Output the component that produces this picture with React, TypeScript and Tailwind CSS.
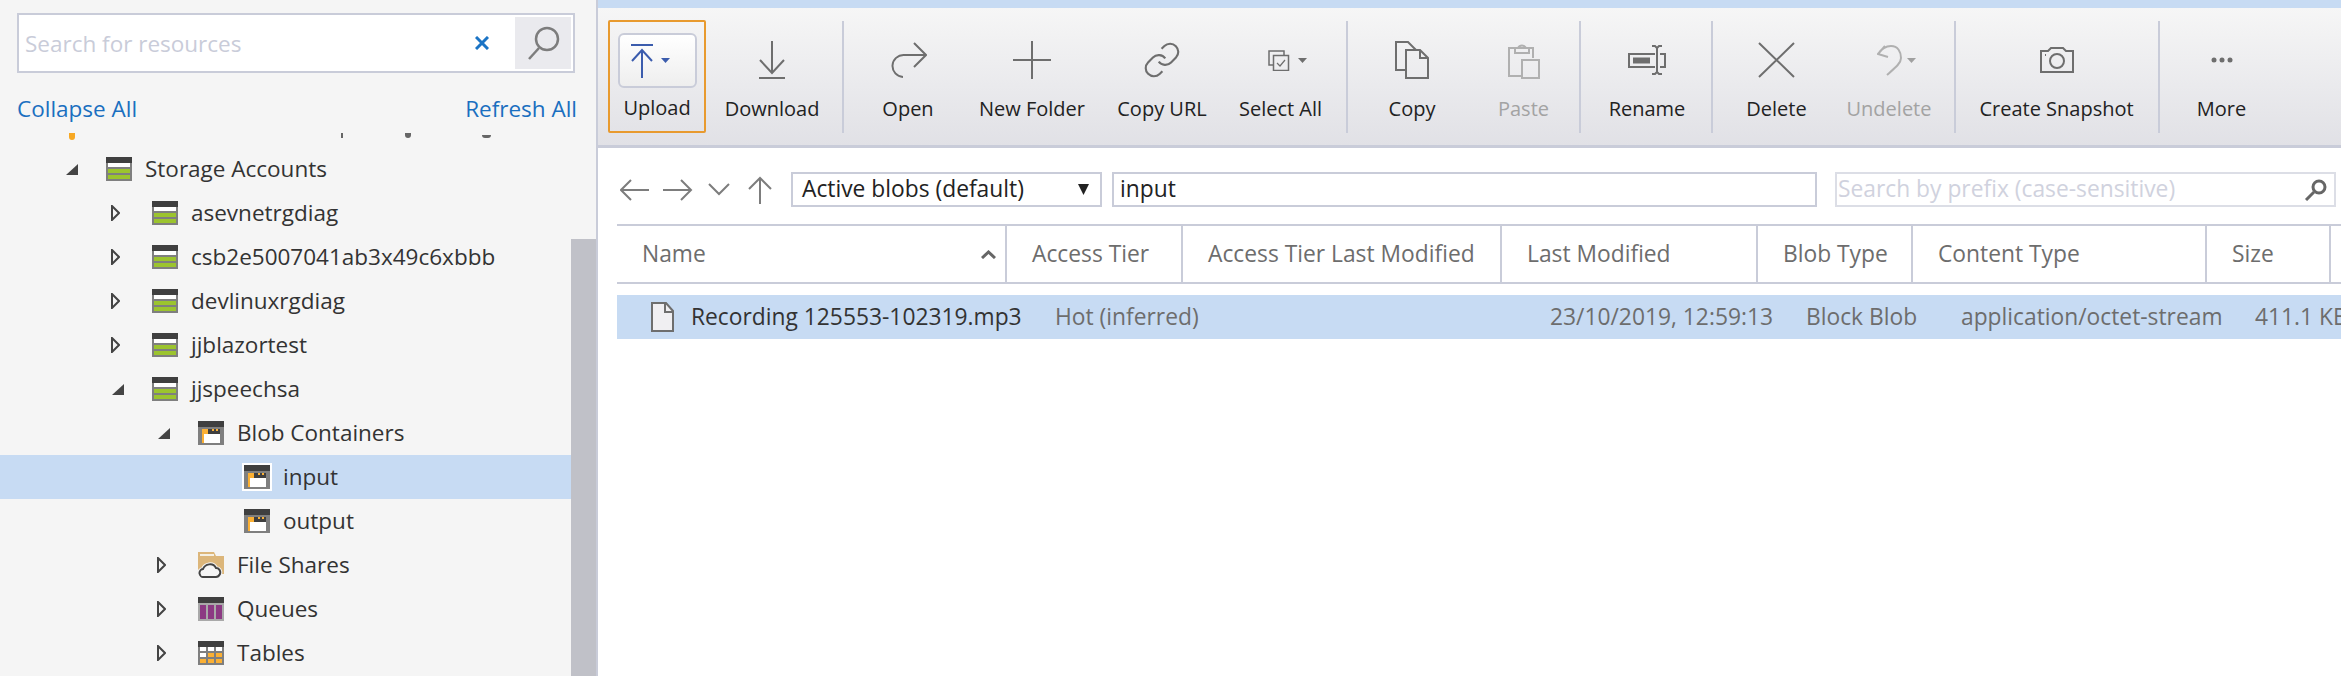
import type { ReactNode } from "react";

function Caret({ color = "#3b5cad" }: { color?: string }) {
  return (
    <svg width="9" height="5" viewBox="0 0 9 5" className="shrink-0">
      <path d="M0 0h9L4.500 5z" fill={color} />
    </svg>
  );
}

const stroke = "#6e6e6e";
const muted = "#b0b0b0";

const UploadIcon = (
  <div className="flex items-center gap-[7px] pl-[10px]">
    <svg width="24" height="34" viewBox="0 0 24 34" fill="none" stroke="#3b5cad" strokeWidth="2">
      <path d="M1 1h22M12 6v31M2 17L12 6l10 11" />
    </svg>
    <Caret />
  </div>
);

const toolbar: { label: string; width: string; icon: ReactNode; disabled?: boolean; sep?: string }[] = [
  {
    label: "Download",
    width: "w-[132px]",
    icon: (
      <svg width="26" height="38" viewBox="0 0 26 38" fill="none" stroke={stroke} strokeWidth="2">
        <path d="M13 0v32M1 19l12 13 12-13M0 37h26" />
      </svg>
    ),
    sep: "ml-[4px]",
  },
  {
    label: "Open",
    width: "w-[120px]",
    icon: (
      <svg width="37" height="36" viewBox="0 0 37 36" fill="none" stroke={stroke} strokeWidth="2">
        <path d="M24 1l12 12-12 12M36 13H14A11 11 0 0 0 13 35" />
      </svg>
    ),
  },
  {
    label: "New Folder",
    width: "w-[128px]",
    icon: (
      <svg width="38" height="38" viewBox="0 0 38 38" fill="none" stroke={stroke} strokeWidth="2">
        <path d="M19 0v38M0 19h38" />
      </svg>
    ),
  },
  {
    label: "Copy URL",
    width: "w-[132px]",
    icon: (
      <svg width="36" height="36" viewBox="1 1 22 22" fill="none" stroke={stroke} strokeWidth="1.300">
        <path d="M10 13a5 5 0 0 0 7.540.540l3-3a5 5 0 0 0-7.070-7.070l-1.720 1.710" />
        <path d="M14 11a5 5 0 0 0-7.540-.540l-3 3a5 5 0 0 0 7.070 7.070l1.710-1.710" />
      </svg>
    ),
  },
  {
    label: "Select All",
    width: "w-[105px]",
    icon: (
      <div className="flex items-center gap-[8px] pl-[14px]">
        <svg width="22" height="21" viewBox="0 0 22 21" fill="none" stroke={stroke} strokeWidth="1.500">
          <path d="M5 15H1V1h15v4" />
          <path d="M5.500 5.500h15v15h-15z" />
          <path d="M9 13l3 3 5-6" strokeWidth="1.200" />
        </svg>
        <Caret color="#6e6e6e" />
      </div>
    ),
    sep: "ml-[13px]",
  },
  {
    label: "Copy",
    width: "w-[120px]",
    icon: (
      <svg width="34" height="38" viewBox="0 0 34 38" fill="none" stroke={stroke} strokeWidth="2">
        <path d="M10 29H1V1h12l8 8" />
        <path d="M11 9h14l8 8v20H11z" />
        <path d="M25 9v8h8" />
      </svg>
    ),
  },
  {
    label: "Paste",
    width: "w-[103px]",
    disabled: true,
    icon: (
      <svg width="32" height="38" viewBox="0 0 32 38" fill="none" stroke={muted} strokeWidth="2">
        <path d="M14 35H1V7h24v10" />
        <path d="M7 7v5h14V7h-3a4.500 4.500 0 0 0-8 0z" />
        <path d="M14 19h17v18H14z" />
      </svg>
    ),
    sep: "ml-[4px]",
  },
  {
    label: "Rename",
    width: "w-[124px]",
    icon: (
      <svg width="38" height="30" viewBox="0 0 38 30" fill="none" stroke={stroke} strokeWidth="2">
        <path d="M27 9H1v13h26" />
        <path d="M5 12.500h17v6H5z" fill={stroke} stroke="none" />
        <path d="M24 1h3l2 2 2-2h3M24 29h3l2-2 2 2h3M29 3v24M32 9h5v13h-5" />
      </svg>
    ),
    sep: "ml-[2px]",
  },
  {
    label: "Delete",
    width: "w-[119px]",
    icon: (
      <svg width="37" height="36" viewBox="0 0 37 36" fill="none" stroke={stroke} strokeWidth="2">
        <path d="M1 1l35 34M36 1L1 35" />
      </svg>
    ),
  },
  {
    label: "Undelete",
    width: "w-[106px]",
    disabled: true,
    icon: (
      <div className="flex items-center gap-[4px] pl-[14px]">
        <svg width="26" height="31" viewBox="0 0 26 31" fill="none" stroke={muted} strokeWidth="2">
          <path d="M8 1L1 9l10 3M1 9C5 3 10 1 14 1c7 0 10 6 10 12 0 5-5 9-14 17" />
        </svg>
        <Caret color="#a0a0a0" />
      </div>
    ),
    sep: "ml-[12px]",
  },
  {
    label: "Create Snapshot",
    width: "w-[193px]",
    icon: (
      <svg width="34" height="26" viewBox="0 0 34 26" fill="none" stroke={stroke} strokeWidth="2">
        <path d="M1 4h7l3-3h12l3 3h7v21H1z" />
        <circle cx="17" cy="14" r="7" />
        <path d="M5 8h1" />
      </svg>
    ),
    sep: "ml-[5px]",
  },
  {
    label: "More",
    width: "w-[115px]",
    icon: (
      <svg width="22" height="6" viewBox="0 0 22 6" fill={stroke}>
        <circle cx="3" cy="3" r="2.500" />
        <circle cx="11" cy="3" r="2.500" />
        <circle cx="19" cy="3" r="2.500" />
      </svg>
    ),
  },
];

function StorageIcon() {
  return (
    <svg width="26" height="24" viewBox="0 0 26 24" className="shrink-0">
      <rect width="26" height="24" fill="#7f7f7f" />
      <rect width="26" height="6" fill="#3f3f3f" />
      <rect x="2" y="6" width="22" height="4" fill="#fff" />
      <rect x="2" y="12" width="22" height="4" fill="#9cc42e" />
      <rect x="2" y="18" width="22" height="4" fill="#9cc42e" />
    </svg>
  );
}

function ContainerIcon() {
  return (
    <svg width="26" height="24" viewBox="0 0 26 24" className="shrink-0">
      <rect width="26" height="24" fill="#7f7f7f" />
      <rect width="26" height="6" fill="#3f3f3f" />
      <rect x="4" y="8" width="18" height="14" fill="#fbb034" />
      <rect x="10" y="8" width="12" height="5" fill="#3f3f3f" />
      <rect x="14" y="8" width="2" height="2" fill="#fbb034" />
      <rect x="18" y="8" width="2" height="2" fill="#fbb034" />
      <rect x="6" y="13" width="16" height="9" fill="#fff" />
    </svg>
  );
}

function FolderCloudIcon() {
  const cloud = "M6 25a4 4 0 0 1-1-8C7 12 15 10 18 16c3 0 5 3 4 6-1 2-2 3-4 3z";
  return (
    <svg width="26" height="26" viewBox="0 0 26 26" className="shrink-0">
      <path d="M0 0h16l2 4h8v18H0z" fill="#dcb67a" />
      <path d="M2 2h14v2H2z" fill="#f5f0e4" />
      <path d={cloud} fill="#f5f5f5" stroke="#f5f5f5" strokeWidth="4" />
      <path d={cloud} fill="#f5f5f5" stroke="#444" strokeWidth="2" />
    </svg>
  );
}

function QueueIcon() {
  return (
    <svg width="26" height="24" viewBox="0 0 26 24" className="shrink-0">
      <rect width="26" height="24" fill="#a9a9a9" />
      <rect width="26" height="6" fill="#3f3f3f" />
      <rect x="2" y="8" width="6" height="14" fill="#8c3a83" />
      <rect x="10" y="8" width="6" height="14" fill="#8c3a83" />
      <rect x="18" y="8" width="6" height="14" fill="#8c3a83" />
    </svg>
  );
}

function TableIcon() {
  const cols = [2, 10, 18];
  return (
    <svg width="26" height="24" viewBox="0 0 26 24" className="shrink-0">
      <rect width="26" height="24" fill="#7f7f7f" />
      <rect width="26" height="6" fill="#3f3f3f" />
      {cols.map((x) => (
        <rect key={x} x={x} y="6" width="6" height="4" fill="#fff" />
      ))}
      <rect x="2" y="12" width="6" height="4" fill="#fff" />
      <rect x="10" y="12" width="6" height="4" fill="#fbb034" />
      <rect x="18" y="12" width="6" height="4" fill="#fbb034" />
      {cols.map((x) => (
        <rect key={x} x={x} y="18" width="6" height="4" fill="#fbb034" />
      ))}
    </svg>
  );
}

const indents = ["pl-[66px]", "pl-[112px]", "pl-[158px]", "pl-[204px]"];

const tree: { label: string; level: number; state?: "open" | "closed"; icon: ReactNode; selected?: boolean }[] = [
  { label: "Storage Accounts", level: 0, state: "open", icon: <StorageIcon /> },
  { label: "asevnetrgdiag", level: 1, state: "closed", icon: <StorageIcon /> },
  { label: "csb2e5007041ab3x49c6xbbb", level: 1, state: "closed", icon: <StorageIcon /> },
  { label: "devlinuxrgdiag", level: 1, state: "closed", icon: <StorageIcon /> },
  { label: "jjblazortest", level: 1, state: "closed", icon: <StorageIcon /> },
  { label: "jjspeechsa", level: 1, state: "open", icon: <StorageIcon /> },
  { label: "Blob Containers", level: 2, state: "open", icon: <ContainerIcon /> },
  { label: "input", level: 3, icon: <ContainerIcon />, selected: true },
  { label: "output", level: 3, icon: <ContainerIcon /> },
  { label: "File Shares", level: 2, state: "closed", icon: <FolderCloudIcon /> },
  { label: "Queues", level: 2, state: "closed", icon: <QueueIcon /> },
  { label: "Tables", level: 2, state: "closed", icon: <TableIcon /> },
];

function TreeRow({ item }: { item: (typeof tree)[number] }) {
  return (
    <div className={`flex h-[44px] shrink-0 items-center ${indents[item.level]} ${item.selected ? "bg-[#c7dbf3]" : ""}`}>
      <div className="flex w-[40px] shrink-0 items-center">
        {item.state === "open" && (
          <svg width="12" height="11" viewBox="0 0 12 11">
            <path d="M12 0v11H0z" fill="#444" />
          </svg>
        )}
        {item.state === "closed" && (
          <svg width="9" height="16" viewBox="0 0 9 16" className="ml-[-1px]">
            <path d="M1 1l7 7-7 7z" fill="none" stroke="#444" strokeWidth="2" />
          </svg>
        )}
      </div>
      <div className={item.selected ? "flex shrink-0 outline-2 outline-white" : "flex shrink-0"}>{item.icon}</div>
      <span className="ml-[13px] whitespace-nowrap text-[#333]">{item.label}</span>
    </div>
  );
}

function Sidebar() {
  return (
    <div className="flex w-[598px] shrink-0 flex-col border-r-2 border-[#c9ccd9] bg-[#f5f5f5] text-[22.500px]">
      <div className="ml-[17px] mt-[13px] flex h-[60px] w-[558px] items-center border-2 border-[#c9ccd9] bg-white">
        <span className="flex-1 pl-[6px] pt-[2px] text-[#c9ccd9]">Search for resources</span>
        <svg width="14" height="14" viewBox="0 0 14 14" className="mr-[26px]" fill="none" stroke="#1b74c5" strokeWidth="3">
          <path d="M1 1l12 12M13 1L1 13" />
        </svg>
        <div className="mr-[2px] flex h-[52px] w-[56px] items-center justify-center bg-[#eaeaee]">
          <svg width="33" height="34" viewBox="0 0 33 34" fill="none" stroke="#7d7d7d" strokeWidth="2.500">
            <ellipse cx="20" cy="13" rx="11" ry="11" />
            <path d="M12 22L2 33" />
          </svg>
        </div>
      </div>
      <div className="ml-[17px] mt-[21px] flex h-[30px] w-[560px] items-center justify-between text-[#1a6fc0]">
        <span>Collapse All</span>
        <span>Refresh All</span>
      </div>
      <div className="mt-[9px] flex min-h-0 flex-1 overflow-hidden">
        <div className="flex min-w-0 flex-1 flex-col">
          <div className="relative h-[14px] shrink-0 overflow-hidden">
            <span className="absolute left-[69px] top-0 h-[7px] w-[6px] rounded-b-full bg-[#f7a823]" />
            <span className="absolute left-[341px] top-0 h-[5px] w-[2px] bg-[#666]" />
            <span className="absolute left-[405px] top-0 h-[5px] w-[6px] rounded-b-full bg-[#666]" />
            <span className="absolute left-[482px] top-[2px] h-[3px] w-[9px] rounded-b-full bg-[#666]" />
          </div>
          {tree.map((item) => (
            <TreeRow key={item.label} item={item} />
          ))}
        </div>
        <div className="flex w-[25px] shrink-0 flex-col">
          <div className="mt-[106px] flex-1 bg-[#c0c1c8]" />
        </div>
      </div>
    </div>
  );
}

function Toolbar() {
  return (
    <div className="flex h-[140px] shrink-0 items-start border-b-[3px] border-[#c9ccd9] bg-linear-to-b from-[#f6f6f6] to-[#e1e1e6] pl-[10px] pt-[12px] text-[20px] text-[#222]">
      <div className="flex h-[113px] w-[98px] shrink-0 flex-col items-center rounded-[2px] border-2 border-[#e89a2f] pt-[11px]">
        <div className="flex h-[55px] w-[79px] items-center rounded-[6px] border-2 border-[#c9ccd9] bg-linear-to-b from-white to-[#eeeeee]">
          {UploadIcon}
        </div>
        <span className="mt-[5px] leading-[30px]">Upload</span>
      </div>
      {toolbar.map((t) => (
        <div key={t.label} className="flex shrink-0">
          <div className={`flex h-[113px] ${t.width} flex-col items-center ${t.disabled ? "text-[#a3a3a3]" : ""}`}>
            <div className="flex h-[74px] items-center justify-center pt-[6px]">{t.icon}</div>
            <span className="whitespace-nowrap leading-[30px]">{t.label}</span>
          </div>
          {t.sep && <div className={`${t.sep} mr-[4px] mt-[1px] h-[112px] w-[2px] bg-[#c9ccd9]`} />}
        </div>
      ))}
    </div>
  );
}

function NavRow() {
  return (
    <div className="flex h-[76px] shrink-0 items-center pl-[22px] pr-[5px] pt-[7px]">
      <svg width="30" height="22" viewBox="0 0 30 22" fill="none" stroke="#7d7d7d" strokeWidth="2">
        <path d="M29 11H2M11 1L1 11l10 10" />
      </svg>
      <svg width="30" height="22" viewBox="0 0 30 22" className="ml-[13px]" fill="none" stroke="#7d7d7d" strokeWidth="2">
        <path d="M0 11h27M18 1l10 10-10 10" />
      </svg>
      <svg width="22" height="13" viewBox="0 0 22 13" className="ml-[15px]" fill="none" stroke="#7d7d7d" strokeWidth="2">
        <path d="M1 1l10 10L21 1" />
      </svg>
      <svg width="24" height="28" viewBox="0 0 24 28" className="ml-[18px]" fill="none" stroke="#7d7d7d" strokeWidth="2">
        <path d="M12 28V2M1 13L12 2l11 11" />
      </svg>
      <div className="ml-[19px] flex h-[35px] w-[311px] items-center justify-between border-2 border-[#c9ccd9] pl-[9px] pr-[11px] text-[#222]">
        <span>Active blobs (default)</span>
        <svg width="11" height="11" viewBox="0 0 11 11">
          <path d="M0 0h11L5.500 11z" fill="#222" />
        </svg>
      </div>
      <div className="ml-[10px] flex h-[35px] w-[705px] items-center border-2 border-[#c9ccd9] pl-[6px] text-[#222]">input</div>
      <div className="ml-[18px] flex h-[35px] flex-1 items-center justify-between border-2 border-[#dcdee6] pl-[1px] pr-[6px] text-[#d0d2de]">
        <span>Search by prefix (case-sensitive)</span>
        <svg width="24" height="23" viewBox="0 0 24 23" fill="none" stroke="#666" strokeWidth="3">
          <circle cx="15" cy="9" r="6" />
          <path d="M10 14l-8 8" />
        </svg>
      </div>
    </div>
  );
}

const headers = ["Name", "Access Tier", "Access Tier Last Modified", "Last Modified", "Blob Type", "Content Type", "Size"];
const cells = ["Hot (inferred)", "", "23/10/2019, 12:59:13", "Block Blob", "application/octet-stream", "411.1 KB"];

function BlobTable() {
  return (
    <div className="ml-[19px] flex flex-col">
      <div className="grid h-[60px] grid-cols-[390px_176px_319px_256px_155px_294px_124px_1fr] border-y-2 border-[#c9ccd9] text-[#6d6d6d]">
        {headers.map((h) => (
          <div key={h} className="relative flex items-center border-r-2 border-[#c9ccd9] pl-[25px]">
            {h}
            {h === "Name" && (
              <svg width="15" height="9" viewBox="0 0 15 9" className="absolute right-[9px] top-[24px]" fill="none" stroke="#666" strokeWidth="3">
                <path d="M1 8l6.500-6L14 8" />
              </svg>
            )}
          </div>
        ))}
      </div>
      <div className="mt-[11px] grid h-[44px] grid-cols-[390px_176px_319px_256px_155px_294px_124px_1fr] items-center overflow-hidden bg-[#c7dbf3] text-[#6d6d6d]">
        <div className="flex items-center whitespace-nowrap pl-[33px] text-[#333]">
          <svg width="25" height="30" viewBox="0 0 25 30" className="mr-[16px] shrink-0" fill="#f0eff2" stroke="#6e6e6e" strokeWidth="2">
            <path d="M2 1h14l7 8v20H2z" />
            <path d="M15 1v9h8" fill="none" />
          </svg>
          Recording 125553-102319.mp3
        </div>
        {cells.map((c, i) => (
          <div key={i} className="whitespace-nowrap pl-[48px]">
            {c}
          </div>
        ))}
      </div>
    </div>
  );
}

export default function App() {
  return (
    <div className="flex h-screen w-screen overflow-hidden bg-white font-['Open_Sans',sans-serif]">
      <Sidebar />
      <div className="flex min-w-0 flex-1 flex-col text-[22.800px]">
        <div className="h-[8px] shrink-0 bg-[#c7dbf3]" />
        <Toolbar />
        <NavRow />
        <BlobTable />
      </div>
    </div>
  );
}
